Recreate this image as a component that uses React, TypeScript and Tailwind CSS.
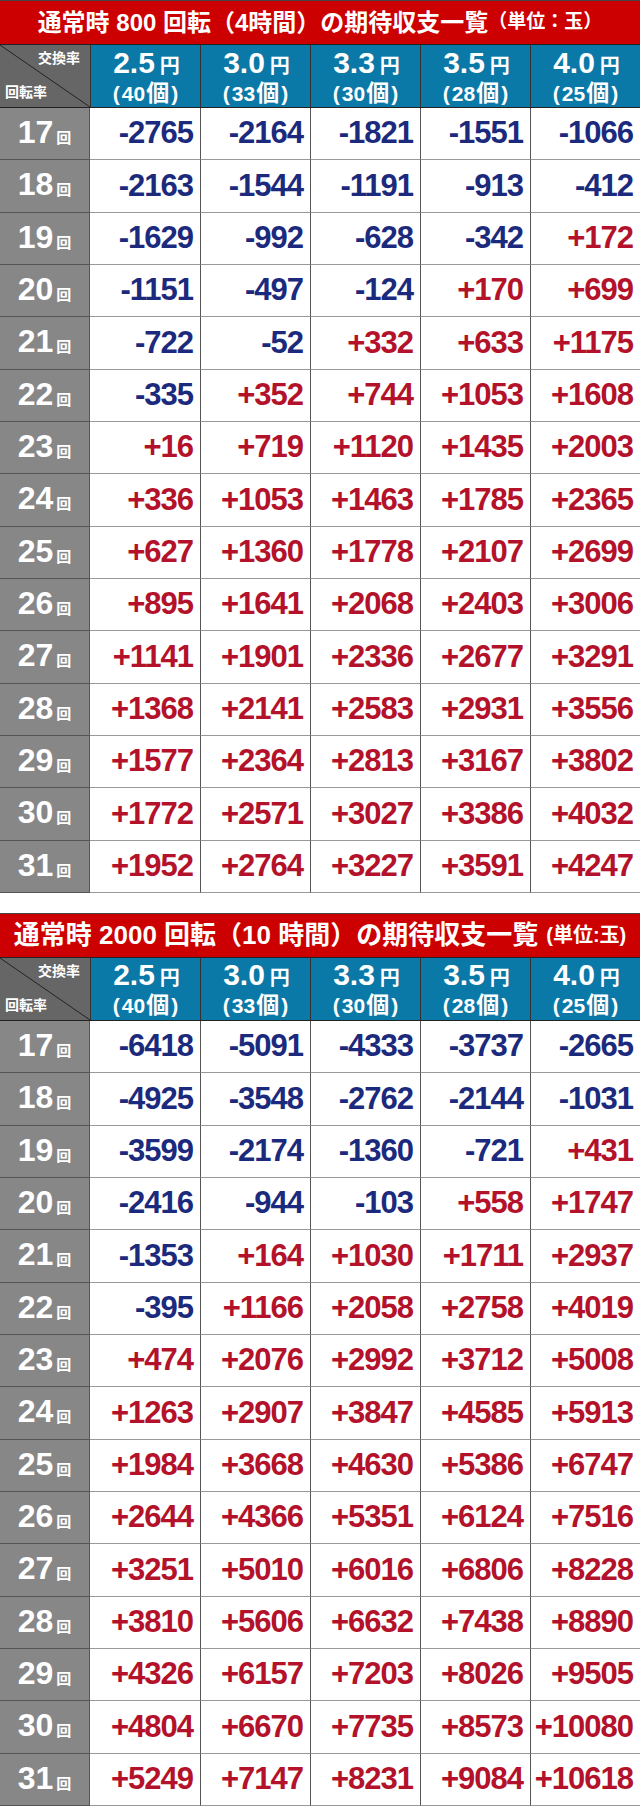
import React from 'react';

type Row = [number, string[]];

const rates = [
  { yen: '2.5', ball: '40' },
  { yen: '3.0', ball: '33' },
  { yen: '3.3', ball: '30' },
  { yen: '3.5', ball: '28' },
  { yen: '4.0', ball: '25' },
];

const table1: Row[] = [
  [17, ['-2765', '-2164', '-1821', '-1551', '-1066']],
  [18, ['-2163', '-1544', '-1191', '-913', '-412']],
  [19, ['-1629', '-992', '-628', '-342', '+172']],
  [20, ['-1151', '-497', '-124', '+170', '+699']],
  [21, ['-722', '-52', '+332', '+633', '+1175']],
  [22, ['-335', '+352', '+744', '+1053', '+1608']],
  [23, ['+16', '+719', '+1120', '+1435', '+2003']],
  [24, ['+336', '+1053', '+1463', '+1785', '+2365']],
  [25, ['+627', '+1360', '+1778', '+2107', '+2699']],
  [26, ['+895', '+1641', '+2068', '+2403', '+3006']],
  [27, ['+1141', '+1901', '+2336', '+2677', '+3291']],
  [28, ['+1368', '+2141', '+2583', '+2931', '+3556']],
  [29, ['+1577', '+2364', '+2813', '+3167', '+3802']],
  [30, ['+1772', '+2571', '+3027', '+3386', '+4032']],
  [31, ['+1952', '+2764', '+3227', '+3591', '+4247']],
];

const table2: Row[] = [
  [17, ['-6418', '-5091', '-4333', '-3737', '-2665']],
  [18, ['-4925', '-3548', '-2762', '-2144', '-1031']],
  [19, ['-3599', '-2174', '-1360', '-721', '+431']],
  [20, ['-2416', '-944', '-103', '+558', '+1747']],
  [21, ['-1353', '+164', '+1030', '+1711', '+2937']],
  [22, ['-395', '+1166', '+2058', '+2758', '+4019']],
  [23, ['+474', '+2076', '+2992', '+3712', '+5008']],
  [24, ['+1263', '+2907', '+3847', '+4585', '+5913']],
  [25, ['+1984', '+3668', '+4630', '+5386', '+6747']],
  [26, ['+2644', '+4366', '+5351', '+6124', '+7516']],
  [27, ['+3251', '+5010', '+6016', '+6806', '+8228']],
  [28, ['+3810', '+5606', '+6632', '+7438', '+8890']],
  [29, ['+4326', '+6157', '+7203', '+8026', '+9505']],
  [30, ['+4804', '+6670', '+7735', '+8573', '+10080']],
  [31, ['+5249', '+7147', '+8231', '+9084', '+10618']],
];

const HeaderCorner = () => (
  <div className="relative h-full bg-[#666666] flex flex-col justify-between px-[8px] py-[4px] text-white font-bold text-[14px] leading-none">
    <svg className="absolute inset-0 w-full h-full" viewBox="0 0 90 63" preserveAspectRatio="none">
      <line x1="0" y1="0" x2="90" y2="63" stroke="#222" strokeWidth="1" />
    </svg>
    <span className="relative self-end pr-[2px] pt-[2px]">交換率</span>
    <span className="relative self-start -ml-[3px] pb-[4px]">回転率</span>
  </div>
);

const DataTable = ({ title, rows }: { title: React.ReactNode; rows: Row[] }) => (
  <div className="border-t border-[#444]">
    <div className="h-[43px] bg-[#cc0000] flex items-center justify-center text-white font-bold whitespace-nowrap">
      {title}
    </div>
    <div className="grid grid-cols-[90px_repeat(5,110px)] h-[64px] border-y border-[#222]">
      <HeaderCorner />
      {rates.map((r) => (
        <div key={r.yen} className="bg-[#0a79a7] border-l border-[#333] flex flex-col items-center justify-center text-white font-bold leading-none">
          <div className="flex items-baseline pl-[2px]">
            <span className="text-[30px]">{r.yen}</span>
            <span className="text-[20px] ml-[5px]">円</span>
          </div>
          <div className="flex items-baseline text-[21px] mt-[4px]">
            <span>(</span>
            <span className="ml-[2px]">{r.ball}</span>
            <span className="text-[23px] ml-[1px]">個</span>
            <span className="ml-[2px]">)</span>
          </div>
        </div>
      ))}
    </div>
    {rows.map(([n, vals]) => (
      <div key={n} className="grid grid-cols-[90px_repeat(5,110px)] h-[52.33px]">
        <div className="bg-[#878787] border-r border-b border-[#555] flex items-baseline justify-center text-white font-bold pt-[8px]">
          <span className="text-[32px] leading-none">{n}</span>
          <span className="text-[15px] leading-none ml-[3px]">回</span>
        </div>
        {vals.map((v, i) => (
          <div
            key={i}
            className={`flex items-center justify-end pr-[7px] text-[31px] font-bold tracking-[-1px] border-b border-b-[#999] ${i > 0 ? 'border-l border-l-[#555]' : ''} ${v.startsWith('+') ? 'text-[#b3122a]' : 'text-[#1b2a7c]'}`}
          >
            {v}
          </div>
        ))}
      </div>
    ))}
  </div>
);

export default function App() {
  return (
    <div className="w-[640px] h-[1816px] bg-white font-['Liberation_Sans','Noto_Sans_CJK_JP',sans-serif]">
      <DataTable
        rows={table1}
        title={
          <>
            <span className="text-[24px]">通常時 800 回転（4時間）の期待収支一覧</span>
            <span className="text-[19px]">（単位：玉）</span>
          </>
        }
      />
      <div className="h-[20px]" />
      <DataTable
        rows={table2}
        title={
          <>
            <span className="text-[26px]">通常時 2000 回転（10 時間）の期待収支一覧</span>
            <span className="text-[20px] ml-[8px]">(単位:玉)</span>
          </>
        }
      />
    </div>
  );
}
